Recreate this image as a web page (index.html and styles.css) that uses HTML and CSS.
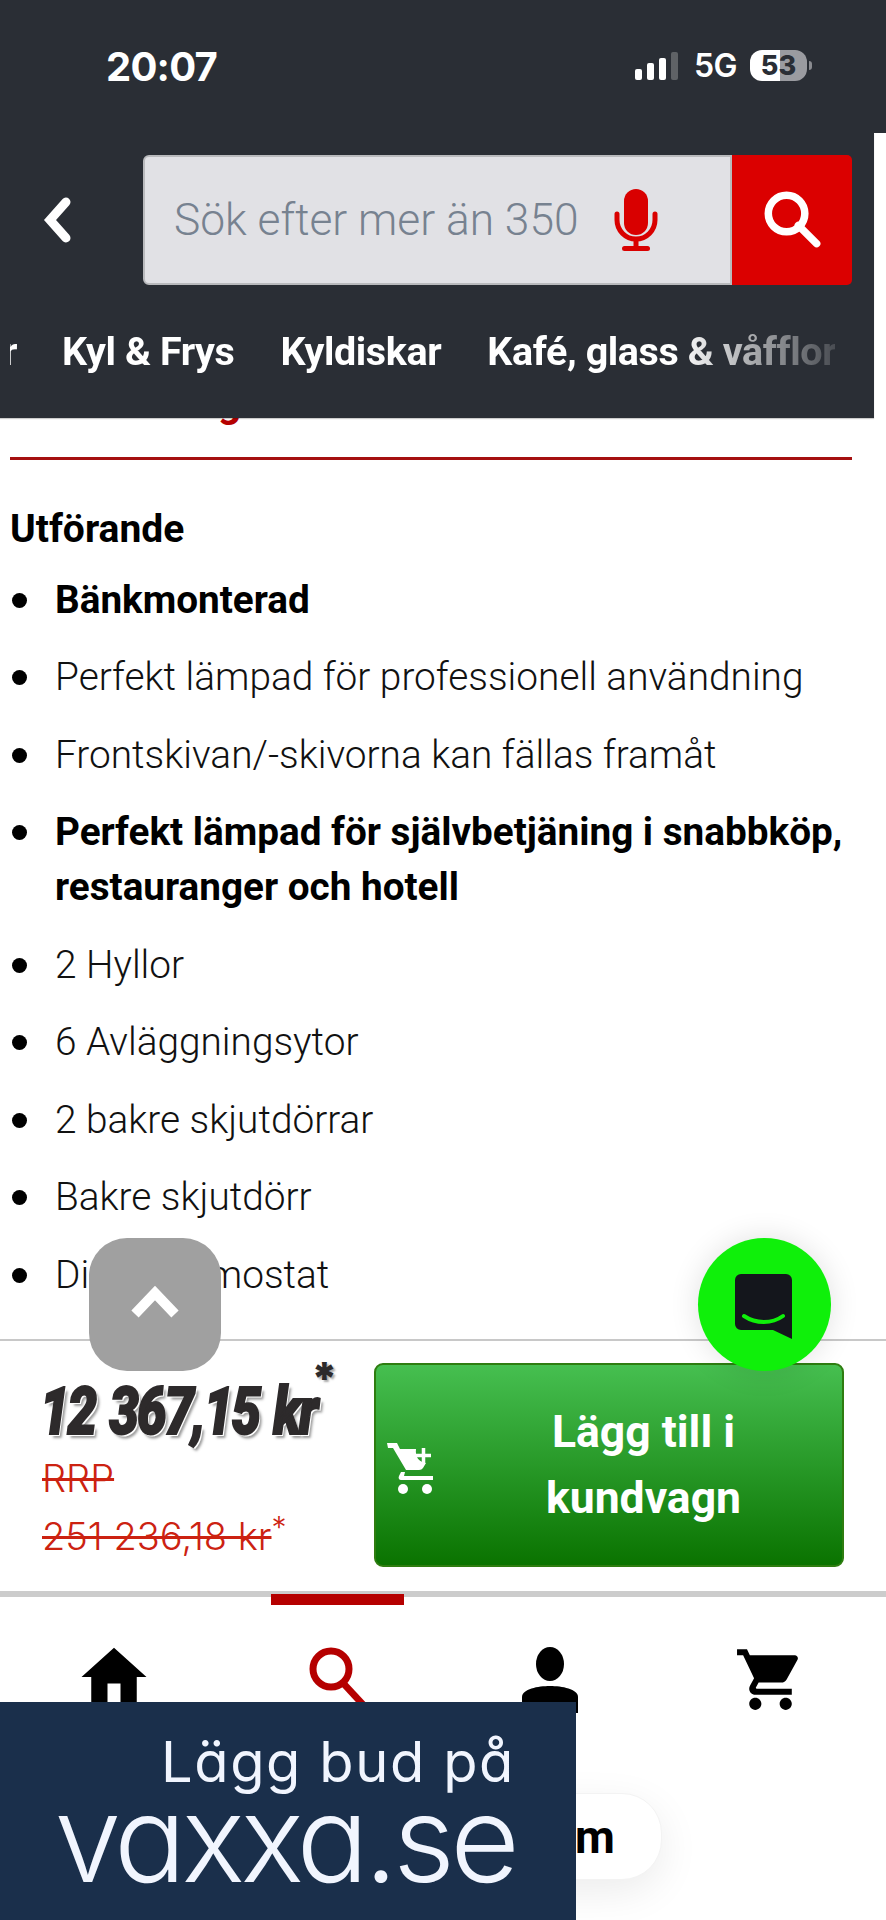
FILE: index.html
```html
<!DOCTYPE html>
<html lang="sv">
<head>
<meta charset="utf-8">
<title>Bänkmonterad kyldisk</title>
<link rel="stylesheet" href="styles.css">
</head>
<body>
<div class="page">
  <div class="status">
    <span class="time">20:07</span>
    <div class="status-right">
      <div class="signal"><i class="b1"></i><i class="b2"></i><i class="b3"></i><i class="b4"></i></div>
      <span class="net">5G</span>
      <div class="battery"><span>53</span></div>
      <i class="nub"></i>
    </div>
  </div>
  <header class="header">
    <div class="search-row">
      <svg class="back" viewBox="0 0 32 48"><path d="M24 6 8 24l16 18" fill="none" stroke="#fff" stroke-width="9" stroke-linecap="round" stroke-linejoin="miter"/></svg>
      <div class="search">
        <div class="search-field">
          <span class="placeholder">Sök efter mer än 350</span>
          <svg class="mic" viewBox="0 0 44 62"><rect x="10" y="0" width="24" height="46" rx="12" fill="#d90000"/><path d="M3 25v6a19 19 0 0 0 38 0v-6" fill="none" stroke="#d90000" stroke-width="5" stroke-linecap="round"/><path d="M22 50v8" stroke="#d90000" stroke-width="5"/><rect x="8" y="57" width="28" height="5" rx="2.5" fill="#d90000"/></svg>
        </div>
        <div class="search-btn">
          <svg viewBox="0 0 54 54"><circle cx="21" cy="21" r="17" fill="none" stroke="#fff" stroke-width="7"/><path d="M32 32l17 17" stroke="#fff" stroke-width="7" stroke-linecap="round"/></svg>
        </div>
      </div>
    </div>
    <nav class="cats">
      <span class="cat cat-cut">r</span>
      <span class="cat">Kyl &amp; Frys</span>
      <span class="cat">Kyldiskar</span>
      <span class="cat">Kafé, glass &amp; våfflor</span>
    </nav>
  </header>
  <main class="content">
    <h2 class="heading">Beskrivning</h2>
    <hr class="rule">
    <h3 class="sub">Utförande</h3>
    <ul class="list">
      <li class="strong">Bänkmonterad</li>
      <li>Perfekt lämpad för professionell användning</li>
      <li>Frontskivan/-skivorna kan fällas framåt</li>
      <li class="strong">Perfekt lämpad för självbetjäning i snabbköp, restauranger och hotell</li>
      <li>2 Hyllor</li>
      <li>6 Avläggningsytor</li>
      <li>2 bakre skjutdörrar</li>
      <li>Bakre skjutdörr</li>
      <li>Digtal termostat</li>
    </ul>
  </main>
  <section class="buybar">
    <div class="prices">
      <div class="price">12 367,15 kr</div>
      <div class="price-star">*</div>
      <div class="rrp"><s>RRP</s></div>
      <div class="rrp"><s>251 236,18 kr</s><span class="rrp-star">*</span></div>
    </div>
    <button class="buy">
      <svg class="buy-icon" viewBox="0 0 48 52"><path d="M0 1h10l3 6h16c-1 8 3 13 10 14l-3 5c-1 1-2 2-4 2H19L6 6H1z" fill="#fff"/><path d="M14 30l-2 4c-1 2 0 4 2 4h32v-4H17l1-4z" fill="#fff"/><circle cx="16" cy="47" r="5" fill="#fff"/><circle cx="40" cy="47" r="5" fill="#fff"/><path d="M36.500 6v15M29 13.500h15" stroke="#fff" stroke-width="3.500"/></svg>
      <span class="buy-text">Lägg till i<br>kundvagn</span>
    </button>
  </section>
  <nav class="tabs">
    <div class="tab tab-home"><svg viewBox="0 0 24 24"><path d="M10 20v-6h4v6h5v-8h3L12 3 2 12h3v8z"/></svg></div>
    <div class="tab tab-search"><i class="tab-mark"></i><svg viewBox="0 0 60 66"><circle cx="22" cy="22" r="18" fill="none" stroke="#b50000" stroke-width="7"/><path d="M34 36l24 26" stroke="#b50000" stroke-width="7"/></svg></div>
    <div class="tab tab-user"><svg viewBox="0 0 56 66"><ellipse cx="28" cy="17" rx="14" ry="17"/><path d="M0 50c0-8 16-11 28-11s28 3 28 11v16H0z"/></svg></div>
    <div class="tab tab-cart"><svg viewBox="0 0 24 24"><path d="M7 18c-1.100 0-1.990.9-1.990 2S5.900 22 7 22s2-.9 2-2-.9-2-2-2zM1 2v2h2l3.600 7.590-1.350 2.450c-.16.28-.25.61-.25.96 0 1.100.9 2 2 2h12v-2H7.420c-.14 0-.25-.11-.25-.25l.03-.12.9-1.630h7.450c.75 0 1.410-.41 1.750-1.030l3.580-6.470c.08-.14.12-.31.12-.48 0-.55-.45-1-1-1H5.210l-.94-2H1zm16 16c-1.100 0-1.990.9-1.990 2s.89 2 1.990 2 2-.9 2-2-.9-2-2-2z"/></svg></div>
  </nav>
  <div class="pill"><span>m</span></div>
  <button class="to-top"><svg viewBox="0 0 50 34"><path d="M5 28 25 7l20 21" fill="none" stroke="#fff" stroke-width="10"/></svg></button>
  <button class="chat"><svg viewBox="0 0 57 65"><path d="M6 0h45a6 6 0 0 1 6 6v59l-19-9H6a6 6 0 0 1-6-6V6a6 6 0 0 1 6-6z" fill="#14161c"/><path d="M9 42c12 8 28 8 39 0" fill="none" stroke="#0ff00a" stroke-width="4" stroke-linecap="round"/></svg></button>
  <aside class="banner">
    <span class="banner-top">Lägg bud på</span>
    <span class="banner-logo">vaxxa.se</span>
  </aside>
</div>
</body>
</html>
```
FILE: styles.css
```css
* { box-sizing: border-box; }
html, body { margin: 0; padding: 0; background: #fff; }
.page { position: relative; width: 886px; height: 1920px; overflow: hidden; font-family: Roboto, "Liberation Sans", sans-serif; color: #111; background: #fff; }

.status { height: 133px; background: #2a2e35; display: flex; justify-content: space-between; padding: 47px 74px 0 106px; color: #fff; position: relative; z-index: 2; }
.time { font: 700 40px/40px Inter, Roboto, sans-serif; letter-spacing: -0.8px; }
.status-right { display: flex; align-items: flex-start; height: 36px; margin-top: 1px; }
.signal { display: flex; align-items: flex-end; gap: 5px; height: 28px; margin-top: 4px; }
.signal i { width: 7px; background: #fff; border-radius: 2px; display: block; }
.b1 { height: 11px; } .b2 { height: 17px; } .b3 { height: 22px; }
.signal .b4 { height: 28px; background: #5f6266; }
.net { font: 600 32px/36px Inter, Roboto, sans-serif; margin: 0 13px 0 16px; letter-spacing: -0.5px; }
.battery { width: 57px; height: 31px; margin-top: 2px; border-radius: 12px; background: linear-gradient(to right, #fff 0 53%, #9a9ba0 53% 100%); color: #2a2e35; font: 800 27px/31px Inter, sans-serif; text-align: center; }
.nub { width: 3px; height: 9px; margin: 13px 0 0 2px; background: #8a8b90; border-radius: 0 3px 3px 0; display: block; }

.header { width: 874px; height: 285px; background: #2a2e35; position: relative; z-index: 2; box-shadow: 0 1px 1px rgba(0,0,0,.2); }
.search-row { display: flex; align-items: center; padding-top: 22px; height: 152px; }
.back { width: 32px; height: 48px; margin: 0 69px 0 42px; flex: none; }
.search { display: flex; width: 709px; height: 130px; }
.search-field { flex: 1; background: #e1e1e5; border: 2px solid #b9babd; border-radius: 6px 0 0 6px; display: flex; align-items: center; padding-left: 29px; }
.placeholder { font-size: 44.3px; font-weight: 300; color: #778290; white-space: nowrap; width: 439px; flex: none; }
.mic { width: 44px; height: 62px; flex: none; margin-left: 1px; }
.search-btn { width: 120px; background: #db0000; border-radius: 0 5px 5px 0; display: flex; align-items: center; justify-content: center; }
.search-btn svg { width: 58px; height: 58px; margin: 0 0 0 2px; }

.cats { display: flex; gap: 46px; align-items: center; margin-left: 10px; width: 825px; height: 95px; padding-top: 34px; margin-top: 2px; overflow: hidden; white-space: nowrap; color: #fff; -webkit-mask-image: linear-gradient(to right, #000 81%, rgba(0,0,0,.15) 100%); mask-image: linear-gradient(to right, #000 81%, rgba(0,0,0,.15) 100%); }
.cat { font-size: 39.5px; font-weight: 700; letter-spacing: -0.4px; flex: none; }
.cat-cut { width: 7px; margin-right: -1px; overflow: hidden; direction: rtl; }

.content { height: 921px; padding: 0 20px 0 10px; overflow: hidden; }
.heading { margin: -40px 0 0; font-size: 41px; line-height: 50px; font-weight: 700; color: #b50000; height: 50px; letter-spacing: 1.3px; }
.rule { border: 0; height: 3px; background: #a51010; margin: 29px 14px 0 0; }
.sub { margin: 47px 0 0; font-size: 39px; line-height: 44px; font-weight: 700; color: #000; }
.list { list-style: none; margin: 20.5px 0 0; padding: 0; }
.list li { display: flex; font-size: 38.8px; line-height: 55px; font-weight: 300; color: #111; margin-bottom: 22.5px; }
.list li::before { content: ""; flex: none; width: 15px; height: 15px; border-radius: 50%; background: #000; margin: 21px 28px 0 2px; }
.list li.strong { font-weight: 700; color: #000; font-size: 38.7px; }

.buybar { height: 258px; border-top: 2px solid #c8c8c8; border-bottom: 6px solid #ccc; display: flex; padding: 22px 42px 0 42px; position: relative; background: #fff; }
.prices { width: 332px; flex: none; position: relative; }
.price { font-size: 66px; line-height: 66px; font-weight: 900; font-style: italic; color: #2d2a2b; white-space: nowrap; transform: scaleX(.8); transform-origin: left top; margin: 16px 0 0 -2px; letter-spacing: -2.6px; word-spacing: 4px; -webkit-text-stroke: 2px #2d2a2b; text-shadow: 2px 2px 0 #fff, 4px 4px 3px #999; }
.price-star { position: absolute; left: 269px; top: 0; font: 900 44px/30px Inter, sans-serif; color: #2d2a2b; text-shadow: 2px 2px 2px #aaa; }
.rrp { font-size: 38px; line-height: 58px; color: #cc2211; font-family: Inter, Roboto, sans-serif; font-weight: 300; white-space: nowrap; letter-spacing: 0; }
.price + .price-star + .rrp { margin-top: 4px; }
.rrp-star { font-size: 30px; vertical-align: 12px; line-height: 0; }
.buy { width: 470px; height: 204px; border: 2px solid #2e7d10; border-radius: 9px; background: linear-gradient(#46bf50, #0a7300); display: flex; align-items: center; padding: 0 0 0 11px; color: #fff; font-family: Roboto, sans-serif; }
.buy-icon { width: 48px; height: 52px; flex: none; margin-top: 6px; }
.buy-text { flex: none; width: 361px; margin-left: 28px; text-align: center; font-size: 44.5px; line-height: 66px; font-weight: 700; }

.tabs { display: grid; grid-template-columns: repeat(4, 221.5px); height: 324px; }
.tab { position: relative; display: flex; justify-content: center; padding-top: 41px; }
.tab svg { display: block; }
.tab-home svg { width: 78px; height: 78px; margin: 0 0 0 7px; }
.tab-search svg { width: 60px; height: 66px; margin: 9px 0 0 14px; }
.tab-user svg { width: 56px; height: 66px; margin: 9px 0 0 -8px; }
.tab-cart svg { width: 73px; height: 73px; margin: 5px 0 0 -9px; }
.tab-mark { position: absolute; left: 49px; top: -3px; width: 133px; height: 11px; background: #b50000; }

.pill { position: absolute; left: 470px; top: 1793px; width: 192px; height: 87px; border-radius: 40px; background: #fff; border: 1px solid #f3f3f3; box-shadow: 0 12px 40px rgba(0,0,0,.08); display: flex; align-items: center; padding-left: 104px; }
.pill span { font-size: 46px; font-weight: 700; color: #000; }
.to-top { position: absolute; left: 89px; top: 1238px; width: 132px; height: 133px; border: 0; border-radius: 38px; background: #a0a0a0; display: flex; align-items: center; justify-content: center; padding: 0; z-index: 3; }
.to-top svg { width: 50px; height: 34px; margin-bottom: 4px; }
.chat { position: absolute; left: 698px; top: 1238px; width: 133px; height: 133px; border: 0; border-radius: 50%; background: #0ff00a; box-shadow: 0 0 30px rgba(0,0,0,.12); display: flex; align-items: center; justify-content: center; padding: 0; z-index: 3; }
.chat svg { width: 57px; height: 65px; margin: 4px 0 0 -3px; }
.banner { position: absolute; left: 0; top: 1702px; width: 576px; height: 218px; background: #1a2f4b; color: #f1f5fe; display: flex; flex-direction: column; align-items: flex-end; padding: 24px 61px 0 0; font-family: Inter, sans-serif; font-feature-settings: "cv11" 1; z-index: 4; }
.banner-top { font-size: 56px; line-height: 72px; letter-spacing: 1.6px; font-weight: 400; }
.banner-logo { font-size: 120px; line-height: 90px; font-weight: 300; letter-spacing: -4.8px; margin-top: -4px; }
```
